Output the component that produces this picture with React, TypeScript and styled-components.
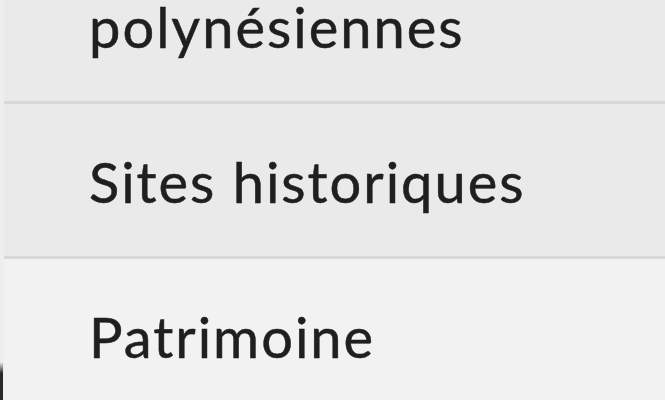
import React from "react";
import styled, { createGlobalStyle } from "styled-components";

const Global = createGlobalStyle`
  html, body { margin: 0; padding: 0; background: #f3f2f2; }
  body { font-family: Lato, "Noto Sans", sans-serif; overflow: hidden; }
`;

const Page = styled.div`
  display: flex;
  width: 665px;
  height: 400px;
  overflow: hidden;
  background: #f3f2f2;
`;

const Gutter = styled.div`
  width: 4px;
  flex: none;
  display: flex;
  flex-direction: column;
  justify-content: flex-end;
  background: #efeeee;
`;

const Mark = styled.div`
  width: 3px;
  height: 38px;
  background: linear-gradient(to bottom, rgba(40,40,40,0), #2a2a2a 30%, #2a2a2a);
`;

const List = styled.ul`
  flex: 1;
  list-style: none;
  margin: -51px 0 0;
  padding: 0;
`;

const Row = styled.li<{ $active?: boolean; $last?: boolean }>`
  box-sizing: border-box;
  height: 155px;
  display: flex;
  align-items: center;
  padding: 5px 0 0 85px;
  background: ${(p) => (p.$active ? "#ebeaea" : "#f3f2f2")};
  border-bottom: 3px solid ${(p) => (p.$last ? "transparent" : "#d9d8d8")};
  color: #1f1f1f;
  font-size: 56px;
  line-height: 0.9;
  letter-spacing: 2px;
  -webkit-text-stroke: 0.5px #1f1f1f;
`;

const items = [
  { label: "polynésiennes", active: true },
  { label: "Sites historiques", active: true },
  { label: "Patrimoine", active: false },
];

export default function App() {
  return (
    <>
      <Global />
      <Page>
        <Gutter>
          <Mark />
        </Gutter>
        <List>
          {items.map((it, i) => (
            <Row key={it.label} $active={it.active} $last={i === items.length - 1}>
              {it.label}
            </Row>
          ))}
        </List>
      </Page>
    </>
  );
}
